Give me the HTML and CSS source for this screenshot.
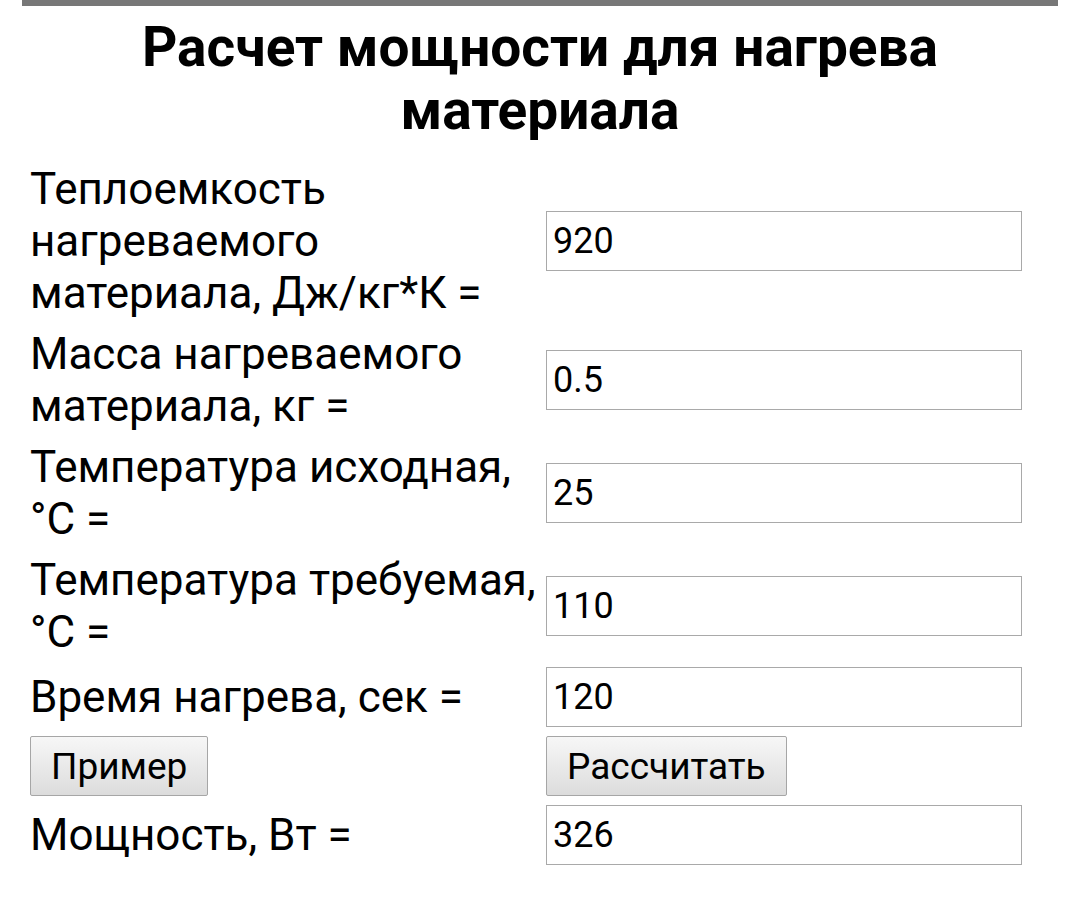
FILE: index.html
```html
<!DOCTYPE html>
<html lang="ru">
<head>
  <meta charset="UTF-8" />
  <meta name="viewport" content="width=device-width, initial-scale=1.0"/>
  <title>Расчет мощности для нагрева материала</title>
  <link rel="stylesheet" href="styles.css">
</head>
<body>

  <div class="page">
    <div class="top-bar"></div>

    <h1>Расчет мощности для нагрева материала</h1>

    <table class="calc">
      <colgroup>
        <col class="col-label">
        <col class="col-value">
      </colgroup>
      <tr>
        <td class="label">Теплоемкость нагреваемого материала, Дж/кг*К =</td>
        <td><input type="text" id="heatCap" value="920"></td>
      </tr>
      <tr>
        <td class="label">Масса нагреваемого материала, кг =</td>
        <td><input type="text" id="mass" value="0.5"></td>
      </tr>
      <tr>
        <td class="label">Температура исходная, °C =</td>
        <td><input type="text" id="tStart" value="25"></td>
      </tr>
      <tr>
        <td class="label">Температура требуемая, °C =</td>
        <td><input type="text" id="tEnd" value="110"></td>
      </tr>
      <tr>
        <td class="label">Время нагрева, сек =</td>
        <td><input type="text" id="time" value="120"></td>
      </tr>
      <tr>
        <td class="label"><button onclick="fillExample()">Пример</button></td>
        <td><button onclick="calculate()">Рассчитать</button></td>
      </tr>
      <tr>
        <td class="label">Мощность, Вт =</td>
        <td><input type="text" id="power" value="326"></td>
      </tr>
    </table>
  </div>

  <script>
    function fillExample() {
      document.getElementById("heatCap").value = 920;
      document.getElementById("mass").value = 0.5;
      document.getElementById("tStart").value = 25;
      document.getElementById("tEnd").value = 110;
      document.getElementById("time").value = 120;
    }

    function calculate() {
      const c = parseFloat(document.getElementById("heatCap").value);
      const m = parseFloat(document.getElementById("mass").value);
      const t1 = parseFloat(document.getElementById("tStart").value);
      const t2 = parseFloat(document.getElementById("tEnd").value);
      const time = parseFloat(document.getElementById("time").value);

      if (!time) {
        alert("Введите время нагрева");
        return;
      }

      // P = c * m * dT / t
      const power = c * m * (t2 - t1) / time;
      document.getElementById("power").value = Math.round(power);
    }
  </script>

</body>
</html>
```

FILE: styles.css
```css
body {
  margin: 0;
  font-family: Roboto, "Liberation Sans", Arial, sans-serif;
  background: #fff;
  color: #000;
}

.page {
  margin: 0 22px;
}

.top-bar {
  height: 6px;
  background: #777;
}

h1 {
  margin: 10px 0 16px;
  font-size: 55px;
  line-height: 63px;
  font-weight: bold;
  text-align: center;
}

.calc {
  width: 100%;
  table-layout: fixed;
  border-collapse: collapse;
}

.col-label {
  width: 524px;
}

.calc td {
  padding: 5px 0 4px 0;
  vertical-align: middle;
}

.calc td.label {
  padding-left: 8px;
  padding-right: 8px;
  font-size: 44px;
  line-height: 52px;
}

input[type="text"] {
  display: block;
  box-sizing: border-box;
  width: 476px;
  height: 60px;
  margin: 0;
  padding: 0 6px;
  border: 1px solid #a9a9a9;
  font-family: Roboto, "Liberation Sans", Arial, sans-serif;
  font-size: 36px;
  color: #000;
  background: #fff;
}

button {
  display: block;
  height: 60px;
  margin: 0;
  padding: 0 20px;
  border: 1px solid #a6a6a6;
  border-radius: 2px;
  background: linear-gradient(#f7f7f7, #dcdcdc);
  font-family: Roboto, "Liberation Sans", Arial, sans-serif;
  font-size: 37px;
  color: #000;
  cursor: pointer;
}

button:hover {
  background: linear-gradient(#fafafa, #e4e4e4);
}
```
